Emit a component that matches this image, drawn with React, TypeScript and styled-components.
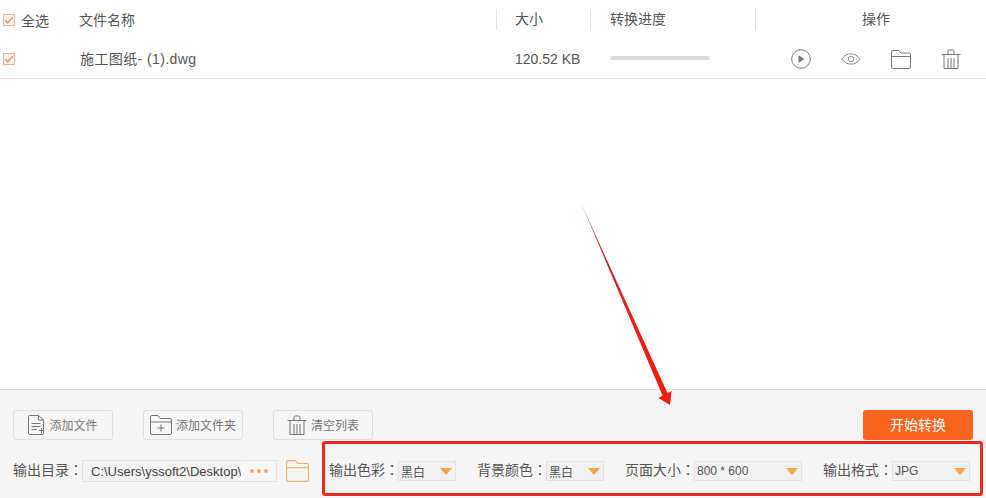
import React from "react";
import styled, { createGlobalStyle } from "styled-components";

const Global = createGlobalStyle`
  html, body { margin: 0; padding: 0; background: #fff; }
  body { font-family: "Liberation Sans", "Noto Sans CJK SC", sans-serif; color: #555; overflow: hidden; }
`;

const Page = styled.div`
  position: relative;
  width: 986px;
  height: 498px;
  display: flex;
  flex-direction: column;
  overflow: hidden;
`;

const List = styled.div`
  flex: 1;
  background: #fff;
`;

const Columns = "76px 420px 94px 165px 231px";

const Header = styled.div`
  display: grid;
  grid-template-columns: ${Columns};
  height: 40px;
  align-items: center;
  font-size: 14px;
`;

const Row = styled.div`
  display: grid;
  grid-template-columns: ${Columns};
  height: 38px;
  align-items: center;
  font-size: 14px;
  border-bottom: 1px solid #dedede;
`;

const Check = styled.span`
  width: 12px;
  height: 12px;
  box-sizing: border-box;
  flex: none;
  border: 1px solid #e4b79d;
  background: #fbf3ee;
  display: flex;
  align-items: center;
  justify-content: center;
`;

const CheckCell = styled.div<{ $top?: number }>`
  display: flex;
  align-items: center;
  gap: 6px;
  padding-left: 3px;
  margin-top: ${(p) => p.$top ?? 0}px;
`;

const NameHead = styled.div`
  padding-left: 3px;
  margin-top: -2px;
`;

const NameCell = styled.div`
  padding-left: 4px;
  letter-spacing: 0.4px;
  margin-top: -2px;
`;

const HeadCell = styled.div<{ $center?: boolean; $pad?: number }>`
  height: 21px;
  line-height: 20px;
  margin-top: -1px;
  border-left: 1px solid #e4e4e4;
  padding-left: ${(p) => p.$pad ?? 0}px;
  text-align: ${(p) => (p.$center ? "center" : "left")};
`;

const SizeCell = styled.div`
  padding-left: 19px;
  font-size: 14px;
`;

const ProgressCell = styled.div`
  padding-left: 20px;
`;

const Track = styled.div`
  width: 100px;
  height: 4px;
  border-radius: 2px;
  background: #dcdcdc;
  margin-top: -2px;
`;

const Actions = styled.div`
  display: flex;
  align-items: center;
  padding-left: 34px;
  gap: 26px;
`;

const ActionSlot = styled.span`
  width: 24px;
  height: 24px;
  display: flex;
  align-items: center;
  justify-content: center;
`;

const Footer = styled.div`
  height: 109px;
  box-sizing: border-box;
  background: #f5f5f6;
  border-top: 1px solid #dedede;
  padding: 20px 13px 0;
`;

const ToolRow = styled.div`
  display: flex;
  align-items: center;
  height: 30px;
`;

const ToolButton = styled.button`
  width: 100px;
  height: 30px;
  box-sizing: border-box;
  margin-right: 30px;
  padding: 0;
  border: 1px solid #dfdfdf;
  border-radius: 3px;
  background: #f5f5f6;
  color: #777;
  font: inherit;
  font-size: 12px;
  display: flex;
  align-items: center;
  justify-content: center;
  gap: 4px;
`;

const ToolLabel = styled.span`
  margin-top: -2px;
`;

const StartButton = styled.button`
  width: 110px;
  height: 30px;
  margin-left: auto;
  margin-right: 0;
  border: 0;
  border-radius: 3px;
  background: #f96421;
  color: #fff;
  font: inherit;
  font-size: 14px;
  padding: 0 0 2px;
`;

const OptionRow = styled.div`
  display: flex;
  align-items: center;
  height: 22px;
  margin-top: 20px;
  font-size: 14px;
`;

const Label = styled.span`
  color: #555;
  white-space: nowrap;
  width: 69px;
  height: 20px;
  line-height: 17px;
  overflow: visible;
  flex: none;
`;

const Colon = styled.span`
  font-family: "Noto Sans CJK TC", sans-serif;
`;

const PathBox = styled.div`
  width: 195px;
  height: 22px;
  box-sizing: border-box;
  border: 1px solid #e2e2e2;
  background: #f3f3f3;
  display: flex;
  align-items: center;
  font-size: 13px;
  flex: none;
  color: #444;
`;

const PathText = styled.span`
  width: 158px;
  padding-left: 8px;
  box-sizing: border-box;
  overflow: hidden;
  white-space: nowrap;
`;

const Dots = styled.span`
  flex: 1;
  height: 100%;
  display: flex;
  align-items: center;
  justify-content: center;
  gap: 3px;
  background: #f7f7f7;
`;

const Dot = styled.i`
  width: 4px;
  height: 4px;
  border-radius: 50%;
  background: #f3ab5f;
`;

const FolderSlot = styled.span`
  width: 23px;
  height: 22px;
  margin: 0 20px 0 9px;
  flex: none;
  display: flex;
`;

const Field = styled.div<{ $gap?: number }>`
  display: flex;
  align-items: center;
  margin-right: ${(p) => p.$gap ?? 21}px;
`;

const Select = styled.div<{ $w: number }>`
  width: ${(p) => p.$w}px;
  height: 20px;
  box-sizing: border-box;
  border: 1px solid #e2e2e2;
  background: #f1f1f2;
  display: flex;
  align-items: center;
  justify-content: space-between;
  padding: 0 2px 0 2px;
  font-size: 12px;
  color: #555;
  flex: none;
`;

const Caret = styled.span`
  width: 0;
  height: 0;
  margin-right: 1px;
  border-left: 6px solid transparent;
  border-right: 6px solid transparent;
  border-top: 7px solid #f3a64c;
`;

const Annotation = styled.div`
  position: absolute;
  left: 322px;
  top: 441px;
  width: 661px;
  height: 55px;
  box-sizing: border-box;
  border: 3px solid #ec2a24;
  border-radius: 3px;
  pointer-events: none;
`;

const Arrow = styled.svg`
  position: absolute;
  left: 570px;
  top: 195px;
  pointer-events: none;
`;

const Tick = () => (
  <svg width="10" height="10" viewBox="0 0 10 10">
    <path d="M1.200 5l2.600 2.800L8.800 2.200" fill="none" stroke="#ee9a68" strokeWidth="1.6" />
  </svg>
);

const PlayIcon = () => (
  <svg width="20" height="20" viewBox="0 0 20 20">
    <circle cx="10" cy="10" r="9.300" fill="none" stroke="#777" strokeWidth="1" />
    <path d="M7.500 6.200L13.500 10L7.500 13.800Z" fill="#777" />
  </svg>
);

const EyeIcon = () => (
  <svg width="20" height="12" viewBox="0 0 20 12">
    <path d="M.8 6C3.500 2.500 6.500 .8 10 .8S16.500 2.500 19.200 6C16.500 9.500 13.500 11.200 10 11.200S3.500 9.500 .8 6Z" fill="none" stroke="#8a8a8a" />
    <circle cx="10" cy="6" r="2.800" fill="none" stroke="#8a8a8a" />
  </svg>
);

const FolderIcon = ({ color = "#777", w = 20, h = 19 }: { color?: string; w?: number; h?: number }) => (
  <svg width={w} height={h} viewBox="0 0 20 19">
    <path d="M.5 2A1.500 1.500 0 0 1 2 .5H8L10 3H18A1.500 1.500 0 0 1 19.500 4.500V17A1.500 1.500 0 0 1 18 18.500H2A1.500 1.500 0 0 1 .5 17ZM.5 6.500H19.500" fill="none" stroke={color} />
  </svg>
);

const TrashIcon = ({ size = 20 }: { size?: number }) => (
  <svg width={size} height={size} viewBox="0 0 20 20">
    <path d="M.5 5.500H19.500M7 5.500V2.500Q7 1 8.500 1H11.500Q13 1 13 2.500V5.500M3 5.500V19.500H17V5.500M7 9V19.500M10 9V19.500M13 9V19.500" fill="none" stroke="#777" />
  </svg>
);

const FileIcon = () => (
  <svg width="17" height="20" viewBox="0 0 17 20">
    <path d="M1.500.5H10.500L15.500 5V18A1.500 1.500 0 0 1 14 19.500H2A1.500 1.500 0 0 1 .5 18V1.500A1 1 0 0 1 1.500.5ZM10.500.5V5H15.500M3.500 8.500H12.500M3.500 11.500H12.500M3.500 14.500H9M11 15.500H16M13.500 13V18" fill="none" stroke="#777" />
  </svg>
);

const AddFolderIcon = () => (
  <svg width="22" height="20" viewBox="0 0 22 20">
    <path d="M.5 2A1.500 1.500 0 0 1 2 .5H8L10 3.500H20A1.500 1.500 0 0 1 21.500 5V18A1.500 1.500 0 0 1 20 19.500H2A1.500 1.500 0 0 1 .5 18ZM.5 7H21.500M7.500 13H14.500M11 9.500V16.500" fill="none" stroke="#777" />
  </svg>
);

export default function App() {
  return (
    <Page>
      <Global />
      <List>
        <Header>
          <CheckCell>
            <Check><Tick /></Check>
            全选
          </CheckCell>
          <NameHead>文件名称</NameHead>
          <HeadCell $pad={18}>大小</HeadCell>
          <HeadCell $pad={19}>转换进度</HeadCell>
          <HeadCell $center $pad={10}>操作</HeadCell>
        </Header>
        <Row>
          <CheckCell $top={-1}>
            <Check><Tick /></Check>
          </CheckCell>
          <NameCell>施工图纸- (1).dwg</NameCell>
          <SizeCell>120.52 KB</SizeCell>
          <ProgressCell><Track /></ProgressCell>
          <Actions>
            <ActionSlot><PlayIcon /></ActionSlot>
            <ActionSlot><EyeIcon /></ActionSlot>
            <ActionSlot><FolderIcon /></ActionSlot>
            <ActionSlot><TrashIcon /></ActionSlot>
          </Actions>
        </Row>
      </List>
      <Footer>
        <ToolRow>
          <ToolButton><FileIcon /><ToolLabel>添加文件</ToolLabel></ToolButton>
          <ToolButton><AddFolderIcon /><ToolLabel>添加文件夹</ToolLabel></ToolButton>
          <ToolButton><TrashIcon /><ToolLabel>清空列表</ToolLabel></ToolButton>
          <StartButton>开始转换</StartButton>
        </ToolRow>
        <OptionRow>
          <Label>输出目录<Colon>：</Colon></Label>
          <PathBox>
            <PathText>C:\Users\yssoft2\Desktop\</PathText>
            <Dots><Dot /><Dot /><Dot /></Dots>
          </PathBox>
          <FolderSlot><FolderIcon color="#f0b070" w={23} h={22} /></FolderSlot>
          <Field>
            <Label>输出色彩<Colon>：</Colon></Label>
            <Select $w={58}>黑白<Caret /></Select>
          </Field>
          <Field>
            <Label>背景颜色<Colon>：</Colon></Label>
            <Select $w={58}>黑白<Caret /></Select>
          </Field>
          <Field>
            <Label>页面大小<Colon>：</Colon></Label>
            <Select $w={108}>800 * 600<Caret /></Select>
          </Field>
          <Field $gap={0}>
            <Label>输出格式<Colon>：</Colon></Label>
            <Select $w={78}>JPG<Caret /></Select>
          </Field>
        </OptionRow>
      </Footer>
      <Annotation />
      <Arrow width="110" height="220" viewBox="0 0 110 220">
        <defs>
          <linearGradient id="fade" x1="0" y1="0" x2="0.4" y2="1">
            <stop offset="0" stopColor="#c08080" />
            <stop offset="0.35" stopColor="#b83030" />
            <stop offset="0.7" stopColor="#ea1f17" />
            <stop offset="1" stopColor="#f01c10" />
          </linearGradient>
        </defs>
        <path d="M11 8L92.500 200.500L88.500 203L100 210L101.500 196L97.500 198Z" fill="url(#fade)" />
      </Arrow>
    </Page>
  );
}
